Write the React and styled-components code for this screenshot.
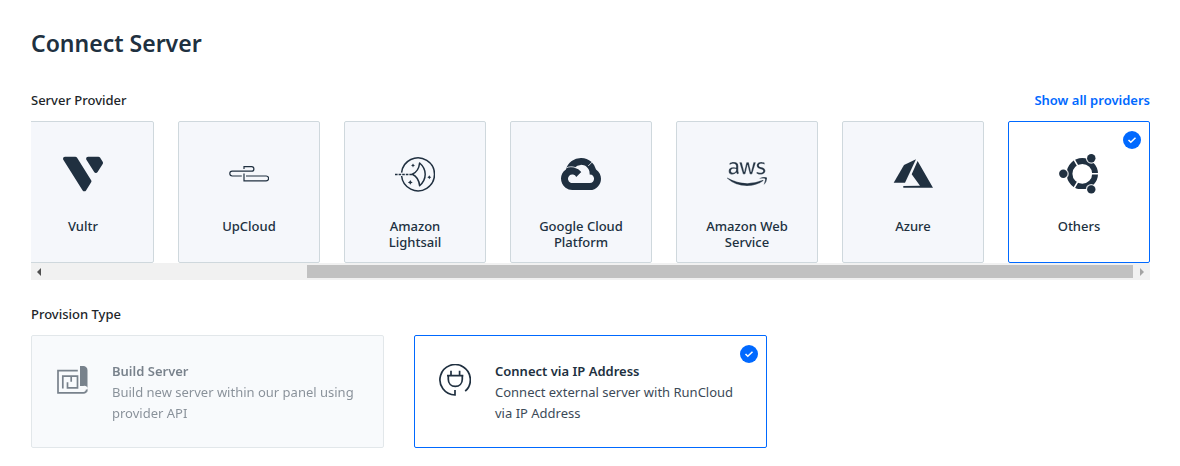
import React, { useEffect, useRef, useState } from 'react';
import styled, { createGlobalStyle, ThemeProvider } from 'styled-components';
import { FaAws, FaDigitalOcean, FaLinode } from 'react-icons/fa';
import { SiGooglecloud, SiVultr } from 'react-icons/si';

const theme = {
  dark: '#203040',
  muted: '#3c4a58',
  primary: '#0069ff',
  border: '#cfd8dd',
  cardBg: '#f5f7fb',
};

const GlobalStyle = createGlobalStyle`
  *, *::before, *::after {
    box-sizing: border-box;
  }

  body {
    margin: 0;
    background: #fff;
    color: #212529;
    font-family: 'Noto Sans', 'Open Sans', sans-serif;
    font-size: 13px;
    line-height: 20px;
  }
`;

const Page = styled.main`
  padding: 27px 30px 18px 31px;
`;

const Title = styled.h1`
  margin: 0 0 31px;
  color: ${props => props.theme.dark};
  font-size: 23px;
  font-weight: 600;
  line-height: 32px;
`;

const Section = styled.section`
  margin-bottom: 24px;

  &:last-child {
    margin-bottom: 0;
  }
`;

const SectionHead = styled.div`
  display: flex;
  align-items: center;
  justify-content: space-between;
  margin-bottom: 11px;
`;

const SectionTitle = styled.h2`
  margin: 0;
  font-size: 13px;
  font-weight: 500;
  line-height: 20px;
`;

const ShowAll = styled.a`
  color: ${props => props.theme.primary};
  font-weight: 600;
  text-decoration: none;
`;

const Viewport = styled.div`
  overflow-x: auto;
  scrollbar-width: none;
`;

const Strip = styled.div`
  display: flex;
  gap: 24px;
  width: max-content;
`;

const Radio = styled.input`
  position: absolute;
  opacity: 0;
  pointer-events: none;
`;

const Card = styled.label`
  position: relative;
  display: flex;
  border: 1px solid ${props => (props.$selected ? props.theme.primary : props.theme.border)};
  border-radius: 2px;
  background: ${props => (props.$selected ? '#fff' : props.theme.cardBg)};
  color: ${props => props.theme.dark};
  cursor: pointer;
`;

const ProviderCard = styled(Card)`
  flex-direction: column;
  align-items: center;
  gap: 24px;
  width: 142px;
  height: 142px;
  padding: 32px 20px 0;
  line-height: 16px;
  text-align: center;

  > svg {
    flex: none;
    width: 40px;
    height: 40px;
  }
`;

const ProviderName = styled.span`
  font-weight: 500;
`;

const TypeGrid = styled.div`
  display: grid;
  grid-template-columns: repeat(3, 1fr);
  gap: 30px;
`;

const TypeCard = styled(Card)`
  gap: 24px;
  padding: 25px 24px 23px;
  line-height: 21px;
  opacity: ${props => (props.$disabled ? 0.6 : 1)};

  > svg {
    flex: none;
    width: 32px;
    height: 32px;
    margin-top: 3px;
  }
`;

const TypeName = styled.strong`
  display: block;
  font-weight: 600;
`;

const TypeText = styled.span`
  color: ${props => props.theme.muted};
`;

const Badge = styled.span`
  position: absolute;
  top: 9px;
  right: 8px;
  display: flex;
  align-items: center;
  justify-content: center;
  width: 18px;
  height: 18px;
  border-radius: 50%;
  background: ${props => props.theme.primary};
`;

const Scrollbar = styled.div`
  display: flex;
  height: 17px;
  background: #f1f1f1;
`;

const ScrollButton = styled.button`
  display: flex;
  align-items: center;
  justify-content: center;
  flex: none;
  width: 17px;
  padding: 0;
  border: 0;
  background: none;
  color: ${props => (props.disabled ? '#a3a3a3' : '#505050')};
`;

const Track = styled.div`
  flex: 1;
  padding: 2px 0;
`;

const Thumb = styled.div`
  height: 13px;
  background: #c1c1c1;
`;

// the stroke thins the solid letters down
const AwsIcon = styled(FaAws)`
  stroke: ${props => props.theme.cardBg};
  stroke-width: 5;
`;

const UpCloudIcon = () =>
  <svg viewBox="0 0 40 40" fill="none" stroke="currentColor" strokeWidth="1.2">
    <path d="M15 15V12.6h7.6a2.3 2.3 0 0 1 0 4.6H3.2a2.4 2.4 0 0 0 0 4.8h9.6" />
    <path d="M17 22h20.2a2.4 2.4 0 0 1 0 4.8H15v-7.2" />
  </svg>;

const LightsailIcon = () =>
  <svg viewBox="0 0 40 40" fill="none" stroke="currentColor" strokeWidth="1.5">
    <path d="M6.6 18.6a16.5 16.5 0 1 1 0 3.4" />
    <path d="M0 20.5h17" strokeDasharray="2.6 1" />
    <path d="M17.3 20.3c4.2-2 6.8-6 7.3-11.3 3.6 3 5.6 7 5.6 11.3s-2 8.3-5.6 11.5c-.5-5.5-3.1-9.5-7.3-11.5z" strokeLinejoin="round" />
    <g fill="currentColor" stroke="none">
      <path d="M18 9.4l.7 1.3 1.3.7-1.3.7-.7 1.3-.7-1.3-1.3-.7 1.3-.7z" />
      <path d="M34.3 21.3l.7 1.3 1.3.7-1.3.7-.7 1.3-.7-1.3-1.3-.7 1.3-.7z" />
      <path d="M15.3 26l.8 1.6 1.6.8-1.6.8-.8 1.6-.8-1.6-1.6-.8 1.6-.8z" />
    </g>
  </svg>;

const GoogleCloudIcon = () =>
  <svg viewBox="0 0 40 40">
    <SiGooglecloud size={40} />
    <path d="M5.5 13.8c2.8-1.3 5.8-1.4 9-.2M27.2 12l5.6-5.6" fill="none" stroke={theme.cardBg} strokeWidth="0.8" />
  </svg>;

const AzureIcon = () =>
  <svg viewBox="0 0 40 40" fill="currentColor">
    <path d="M23 5.3L12 28.7H.7L11 11z" />
    <path d="M24.6 7L40 33.7H10.3V32L27 31.7l-8.3-11.4z" />
  </svg>;

const UbuntuIcon = () =>
  <svg viewBox="0 0 40 40" fill="currentColor">
    <mask id="ubuntu-gaps">
      <rect width="40" height="40" fill="#fff" />
      <path d="M23.3 19.8H40M23.3 19.8l-9-15.6M23.3 19.8l-9 15.6" stroke="#000" strokeWidth="1.6" />
      <circle cx="4.3" cy="19.8" r="5.5" />
      <circle cx="32.3" cy="4.2" r="5.5" />
      <circle cx="32.3" cy="35.4" r="5.5" />
    </mask>
    <circle cx="23.3" cy="19.8" r="12.8" fill="none" stroke="currentColor" strokeWidth="5.8" mask="url(#ubuntu-gaps)" />
    <circle cx="4.3" cy="19.8" r="4.2" />
    <circle cx="32.3" cy="4.2" r="4.2" />
    <circle cx="32.3" cy="35.4" r="4.2" />
  </svg>;

const BuildIcon = () =>
  <svg viewBox="0 0 32 32" fill="none" stroke="currentColor" strokeWidth="1.7">
    <path d="M21.8 6.7H2v22.1h25.5a3.2 3.2 0 0 0 3.2-3.2" />
    <path d="M6.8 24.5V12.2h14.7v11.6H11.5v-5.5M15.2 12.2v5.6" />
    <path d="M24 2h3.3a4.2 4.2 0 0 1 4.2 4.2v20a4 4 0 0 1-2.5 3 3.6 3.6 0 0 0-1.8-7.2H24z" fill="currentColor" stroke="none" />
  </svg>;

const PlugIcon = () =>
  <svg viewBox="0 0 32 32" fill="none" stroke="currentColor" strokeWidth="1.7">
    <path d="M26.2 27.2A15.2 15.2 0 1 0 16 31v-5" />
    <path d="M8 11.6h16.3M12 6.8v4.8M20.6 6.8v4.8" />
    <path d="M9.3 11.6v3.6c0 4.3 2.9 7.2 7 7.2s7-2.9 7-7.2v-3.6" />
  </svg>;

const Check = () =>
  <Badge>
    <svg width="10" height="10" viewBox="0 0 10 10" fill="none" stroke="#fff" strokeWidth="1.5">
      <path d="M1.5 5l2.3 2.3L8.5 2.7" />
    </svg>
  </Badge>;

const providers = [
  { name: 'DigitalOcean', icon: FaDigitalOcean },
  { name: 'Linode', icon: FaLinode },
  { name: 'Vultr', icon: SiVultr },
  { name: 'UpCloud', icon: UpCloudIcon },
  { name: 'Amazon Lightsail', icon: LightsailIcon },
  { name: 'Google Cloud Platform', icon: GoogleCloudIcon },
  { name: 'Amazon Web Service', icon: AwsIcon },
  { name: 'Azure', icon: AzureIcon },
  { name: 'Others', icon: UbuntuIcon },
];

const types = [
  {
    name: 'Build Server',
    text: 'Build new server within our panel using provider API',
    icon: BuildIcon,
    needsApi: true,
  },
  {
    name: 'Connect via IP Address',
    text: 'Connect external server with RunCloud via IP Address',
    icon: PlugIcon,
  },
];

const ProviderScroller = ({ children }) => {
  const viewport = useRef(null);
  const [scroll, setScroll] = useState({ left: 0, view: 1, total: 1 });

  const update = () => {
    const el = viewport.current;
    setScroll({ left: el.scrollLeft, view: el.clientWidth, total: el.scrollWidth });
  };

  const move = step => {
    viewport.current.scrollLeft += step;
  };

  useEffect(() => {
    // the selected provider is the last one
    viewport.current.scrollLeft = viewport.current.scrollWidth;
    update();
    window.addEventListener('resize', update);
    return () => window.removeEventListener('resize', update);
  }, []);

  return (
    <>
      <Viewport ref={viewport} onScroll={update}>
        <Strip>{children}</Strip>
      </Viewport>
      <Scrollbar>
        <ScrollButton type="button" aria-label="Scroll left" disabled={scroll.left <= 0} onClick={() => move(-166)}>
          <svg width="5" height="8" viewBox="0 0 5 8" fill="currentColor"><path d="M4 0v8L0 4z" /></svg>
        </ScrollButton>
        <Track>
          <Thumb
            style={{
              width: `${(scroll.view / scroll.total) * 100}%`,
              marginLeft: `${(scroll.left / scroll.total) * 100}%`,
            }}
          />
        </Track>
        <ScrollButton
          type="button"
          aria-label="Scroll right"
          disabled={scroll.left + scroll.view >= scroll.total - 1}
          onClick={() => move(166)}
        >
          <svg width="5" height="8" viewBox="0 0 5 8" fill="currentColor"><path d="M1 0v8l4-4z" /></svg>
        </ScrollButton>
      </Scrollbar>
    </>
  );
};

const App = () => {
  const [provider, setProvider] = useState('Others');
  const [type, setType] = useState('Connect via IP Address');

  return (
    <ThemeProvider theme={theme}>
      <GlobalStyle />
      <Page>
        <Title>Connect Server</Title>
        <Section>
          <SectionHead>
            <SectionTitle>Server Provider</SectionTitle>
            <ShowAll href="#providers">Show all providers</ShowAll>
          </SectionHead>
          <ProviderScroller>
            {providers.map(({ name, icon: Icon }) =>
              <ProviderCard key={name} $selected={provider === name}>
                <Radio type="radio" name="provider" checked={provider === name} onChange={() => setProvider(name)} />
                <Icon />
                <ProviderName>{name}</ProviderName>
                {provider === name && <Check />}
              </ProviderCard>
            )}
          </ProviderScroller>
        </Section>
        <Section>
          <SectionHead>
            <SectionTitle>Provision Type</SectionTitle>
          </SectionHead>
          <TypeGrid>
            {types.map(({ name, text, icon: Icon, needsApi }) => {
              const disabled = needsApi && provider === 'Others';
              return (
                <TypeCard key={name} $selected={type === name} $disabled={disabled}>
                  <Radio
                    type="radio"
                    name="type"
                    disabled={disabled}
                    checked={type === name}
                    onChange={() => setType(name)}
                  />
                  <Icon />
                  <div>
                    <TypeName>{name}</TypeName>
                    <TypeText>{text}</TypeText>
                  </div>
                  {type === name && <Check />}
                </TypeCard>
              );
            })}
          </TypeGrid>
        </Section>
      </Page>
    </ThemeProvider>
  );
};

export default App;
